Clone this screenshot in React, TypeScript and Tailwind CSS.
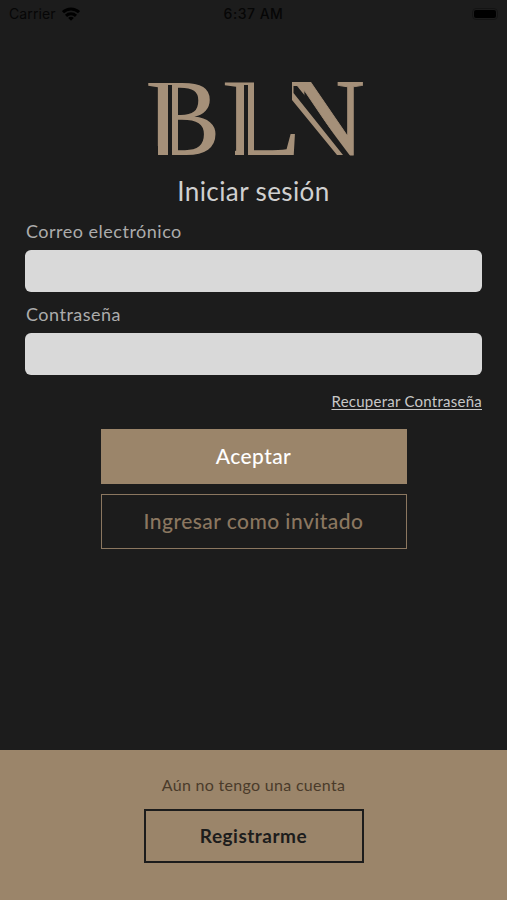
import { useState } from "react";

function StatusBar() {
  return (
    <div className="h-[27px] px-[9px] grid grid-cols-3 items-center text-[14px] text-[#060606] font-['Inter','Liberation_Sans',sans-serif]">
      <div className="flex items-center gap-1.5">
        <span className="tracking-[0.1px]">Carrier</span>
        <svg className="w-[18px] h-[14px]" viewBox="0 0 18 14" fill="none" stroke="#000" strokeWidth="3">
          <path d="M1 5.2a11.5 11.5 0 0 1 16 0" />
          <path d="M4 8.8a7.2 7.2 0 0 1 10 0" />
          <path d="M6.2 10.9a3.8 3.8 0 0 1 5.6 0L9 13.8z" fill="#000" stroke="none" />
        </svg>
      </div>
      <span className="text-center font-medium whitespace-nowrap tracking-[0.5px]">6:37 AM</span>
      <div className="flex items-center justify-end">
        <div className="w-[26px] h-3 p-px rounded border border-[#141414]">
          <div className="w-full h-full bg-black rounded-[2px]" />
        </div>
      </div>
    </div>
  );
}

// Serif letters with a thin inline stripe set beside each heavy stroke
function Logo() {
  return (
    <svg className="w-[230px] h-[124px]" viewBox="140 56 230 124" fill="#a59079" role="img" aria-label="BLN">
      {/* N goes first, its trim reaches under the foot of the L */}
      <g fontFamily="Liberation Serif" fontSize="110">
        <text x="286" y="155" textLength="79" lengthAdjust="spacingAndGlyphs" stroke="#a59079" strokeWidth="0.8">N</text>
        <polygon points="284,80 292,80 292,86 297,86 306,97 351,157 340,158 284,158" fill="#1c1c1c" />
        <text x="145" y="155" textLength="76" lengthAdjust="spacingAndGlyphs">B</text>
        <text x="221" y="155" textLength="82" lengthAdjust="spacingAndGlyphs">L</text>
      </g>
      {/* trims */}
      <g fill="#1c1c1c">
        <rect x="144" y="146" width="14" height="11" />
        <rect x="218" y="146" width="17" height="11" />
        <rect x="168" y="85" width="4" height="72" />
        <rect x="244" y="85" width="4" height="72" />
        <rect x="254" y="80" width="16" height="8" />
      </g>
      {/* stripes */}
      <rect x="172" y="84" width="6" height="71" />
      <rect x="248" y="83" width="6" height="72" />
      <polygon points="292,82 293.5,82 293.5,93 343,155 337,155 292,100" />
    </svg>
  );
}

type FieldProps = {
  label: string;
  type: string;
  value: string;
  onChange: (value: string) => void;
};

function Field({ label, type, value, onChange }: FieldProps) {
  return (
    <label className="block">
      <span className="block h-[41px] pl-px leading-[44px] text-[18px] tracking-[0.5px] text-[#acacac]">{label}</span>
      <input
        type={type}
        value={value}
        onChange={(e) => onChange(e.target.value)}
        className="block w-full h-[42px] px-3 rounded-md bg-[#d9d9d9] text-[#1c1c1c] outline-none"
      />
    </label>
  );
}

export default function App() {
  const [email, setEmail] = useState("");
  const [password, setPassword] = useState("");

  return (
    <div className="w-[507px] h-[900px] flex flex-col bg-[#1c1c1c] overflow-hidden font-['Lato','Open_Sans',sans-serif]">
      <StatusBar />

      <main className="flex-1 px-[25px] pt-[29px] flex flex-col">
        <div className="flex justify-center pl-[3px]">
          <Logo />
        </div>
        <h1 className="-mt-[7px] h-9 leading-9 text-center text-[26px] tracking-[0.4px] text-[#d0d0d0]">Iniciar sesión</h1>

        <Field label="Correo electrónico" type="email" value={email} onChange={setEmail} />
        <Field label="Contraseña" type="password" value={password} onChange={setPassword} />

        <a
          href="#"
          className="self-end mt-4 leading-5 text-[15px] tracking-[0.25px] text-[#c8c8c8] underline underline-offset-2 [text-decoration-skip-ink:none]"
        >
          Recuperar Contraseña
        </a>

        <div className="mt-[18px] w-[306px] self-center flex flex-col gap-2.5">
          <button className="h-[55px] pb-px bg-[#9b856a] text-[21px] font-medium tracking-[0.4px] text-white">Aceptar</button>
          <button className="h-[55px] pb-px border border-[#8b7760] text-[21px] font-medium tracking-[0.45px] text-[#8b7760]">
            Ingresar como invitado
          </button>
        </div>
      </main>

      <footer className="h-[150px] pt-[23px] flex flex-col items-center bg-[#9b856a]">
        <p className="leading-6 text-[16px] tracking-[0.3px] text-[#4a3b2a]">Aún no tengo una cuenta</p>
        <button className="mt-3 w-[220px] h-[54px] border-2 border-[#1c1c1c] text-[19px] font-bold tracking-[0.5px] text-[#1c1c1c]">
          Registrarme
        </button>
      </footer>
    </div>
  );
}
